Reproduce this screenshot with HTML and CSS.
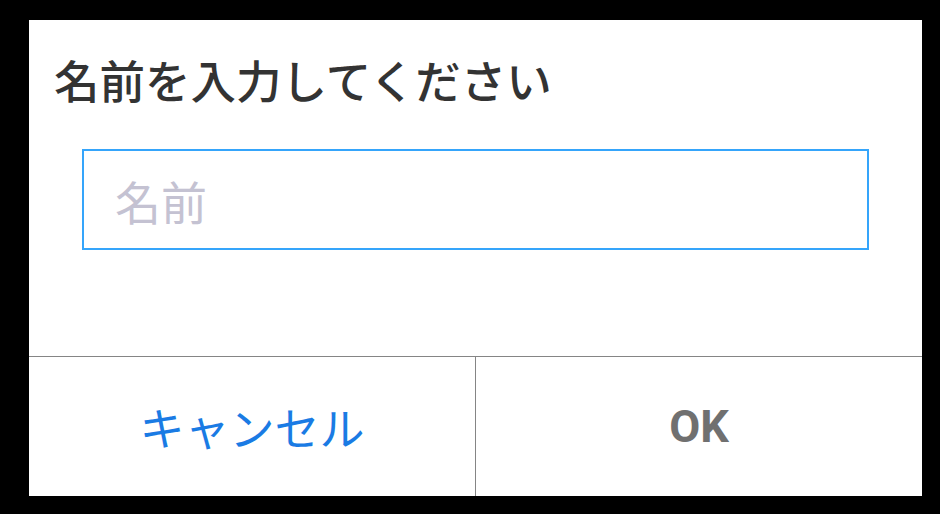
FILE: index.html
```html
<!DOCTYPE html>
<html lang="ja">
<head>
<meta charset="utf-8">
<title>名前を入力してください</title>
<link rel="stylesheet" href="styles.css">
</head>
<body>
<div class="dialog">
  <h1 class="title">名前を入力してください</h1>
  <div class="field">
    <input class="name-input" type="text" placeholder="名前">
  </div>
  <div class="actions">
    <button class="btn btn-cancel">キャンセル</button>
    <button class="btn btn-ok">OK</button>
  </div>
</div>
</body>
</html>
```
FILE: styles.css
```css
html, body {
  margin: 0;
  height: 100%;
  background: #000;
}
body {
  box-sizing: border-box;
  padding: 20px 18px 18px 29px;
  font-family: "Roboto", "Noto Sans CJK JP", sans-serif;
}
.dialog {
  background: #fff;
  height: 476px;
  display: flex;
  flex-direction: column;
}
.title {
  margin: 0;
  padding: 29px 0 0 25px;
  font-family: "Noto Sans CJK JP", sans-serif;
  font-size: 45.5px;
  line-height: 60px;
  font-weight: 500;
  color: #333333;
}
.field {
  padding: 40px 53px 0 53px;
}
.name-input {
  display: block;
  box-sizing: border-box;
  width: 100%;
  height: 101px;
  margin: 0;
  padding: 0 0 0 31px;
  border: 2px solid #35a5fb;
  border-radius: 0;
  outline: none;
  background: #fff;
  font-family: "Noto Sans CJK JP", sans-serif;
  font-size: 46px;
  color: #333;
}
.name-input::placeholder {
  color: #c4c2d2;
  opacity: 1;
}
.actions {
  margin-top: auto;
  display: flex;
  border-top: 1px solid #858585;
  height: 139px;
}
.btn {
  flex: 1;
  margin: 0;
  padding: 0;
  border: none;
  background: #fff;
  font-size: 45px;
  cursor: pointer;
}
.btn-cancel {
  border-right: 1px solid #858585;
  font-family: "Noto Sans CJK JP", sans-serif;
  font-weight: 400;
  color: #1a7be4;
}
.btn-ok {
  font-family: "Roboto", sans-serif;
  font-weight: 700;
  font-size: 45px;
  color: #707070;
}
```
